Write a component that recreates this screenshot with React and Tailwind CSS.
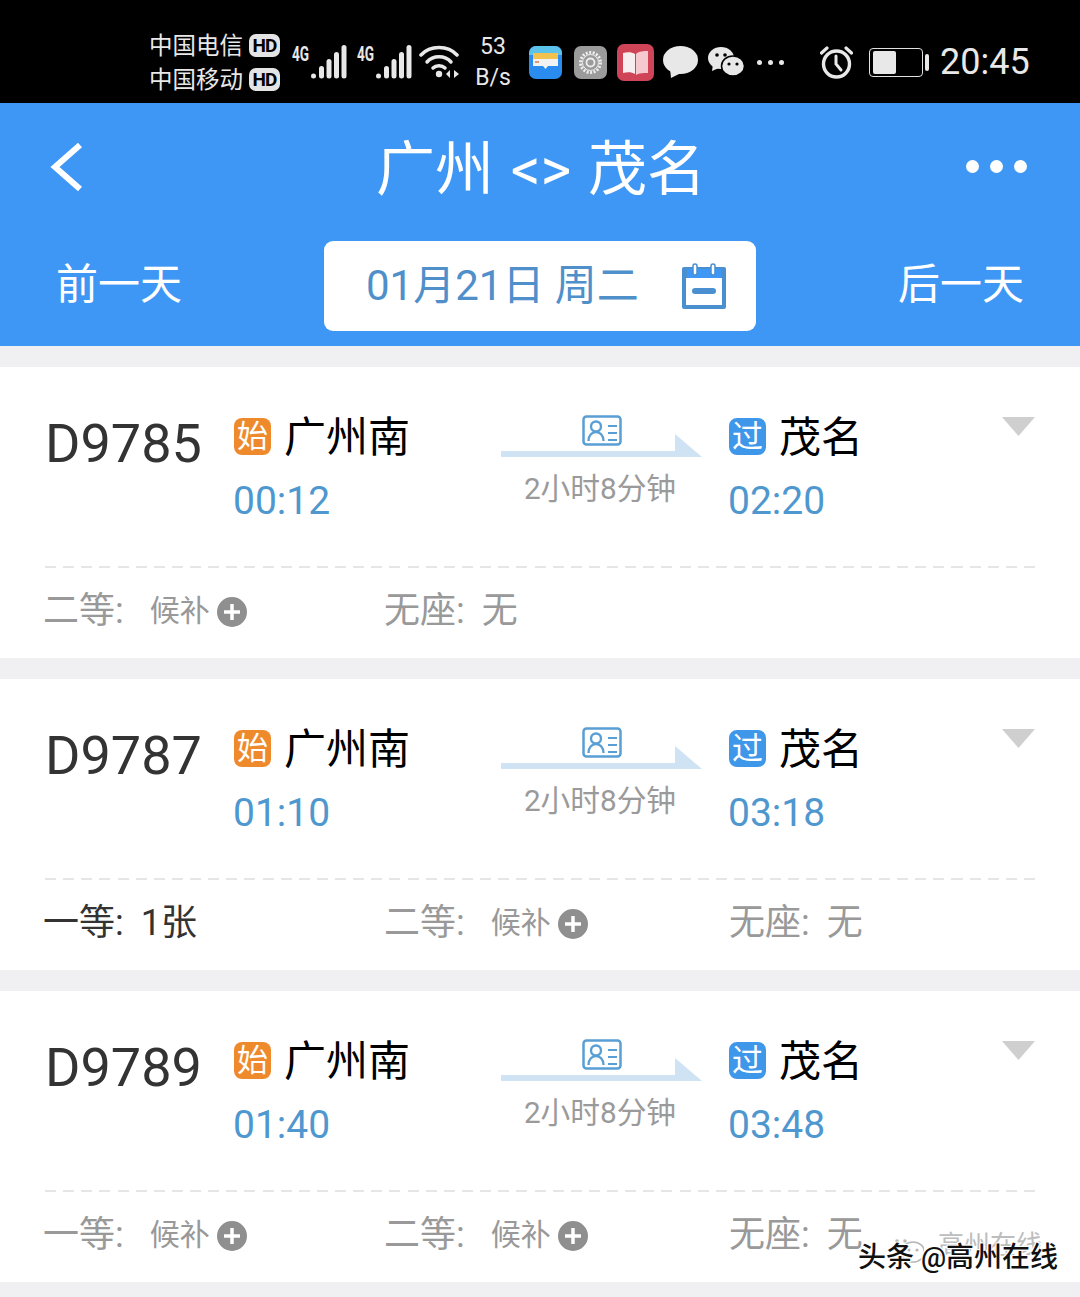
const FONT = 'font-["Roboto","Noto_Sans_CJK_SC",sans-serif]';

const trains = [
  {
    no: "D9785", dep: "00:12", arr: "02:20",
    seats: [
      { label: "二等:", wait: true },
      { label: "无座:", value: "无" },
    ],
  },
  {
    no: "D9787", dep: "01:10", arr: "03:18",
    seats: [
      { label: "一等:", value: "1张", dark: true },
      { label: "二等:", wait: true },
      { label: "无座:", value: "无" },
    ],
  },
  {
    no: "D9789", dep: "01:40", arr: "03:48",
    seats: [
      { label: "一等:", wait: true },
      { label: "二等:", wait: true },
      { label: "无座:", value: "无" },
    ],
  },
];

function HdBadge() {
  return (
    <span className="ml-[6px] flex h-[23px] w-[31px] items-center justify-center rounded-[7px] bg-[#e4e4e4] text-[19px] font-bold leading-none tracking-[-1px] text-black">
      HD
    </span>
  );
}

function Signal() {
  return (
    <div className="flex items-start">
      <span className="w-[19px] origin-left text-[20px] font-bold leading-[18px] text-[#e8e8e8] [transform:scaleX(0.68)]">4G</span>
      <svg width="36" height="34" viewBox="0 0 36 34">
        <circle cx="2.500" cy="31" r="2.500" fill="#e8e8e8" />
        <rect x="8" y="21" width="5" height="12.500" rx="2.500" fill="#e8e8e8" />
        <rect x="15.500" y="14" width="5" height="19.500" rx="2.500" fill="#e8e8e8" />
        <rect x="23" y="7" width="5" height="26.500" rx="2.500" fill="#e8e8e8" />
        <rect x="30.500" y="0" width="5" height="33.500" rx="2.500" fill="#e8e8e8" />
      </svg>
    </div>
  );
}

function Wifi() {
  return (
    <svg width="42" height="36" viewBox="0 0 42 36" fill="none" stroke="#e8e8e8" strokeWidth="3.500" strokeLinecap="round">
      <path d="M2 11C11 1 29 1 38 11" />
      <path d="M8 18C14 11 26 11 32 18" />
      <path d="M14 24C17 21 23 21 26 24" />
      <circle cx="20" cy="30" r="3.200" fill="#e8e8e8" stroke="none" />
      <path d="M31 26l-4 4 4 4z" fill="#e8e8e8" stroke="none" />
      <path d="M35 26l5 4-5 4z" fill="#e8e8e8" stroke="none" />
    </svg>
  );
}

function WalletApp() {
  return (
    <svg width="33" height="33" viewBox="0 0 33 33">
      <rect width="33" height="33" rx="7" fill="#2a8cee" />
      <path d="M0 7a7 7 0 0 1 7-7h19a7 7 0 0 1 7 7v2H0z" fill="#5cc3ec" />
      <rect x="4" y="7" width="25" height="6" fill="#f3c24e" />
      <rect x="4" y="13" width="25" height="7" fill="#f2f2f2" />
      <path d="M14 20h5l-2.500 3z" fill="#f2f2f2" />
      <rect x="6" y="15" width="4" height="2" fill="#e09a7a" />
    </svg>
  );
}

function SettingsApp() {
  return (
    <svg width="33" height="33" viewBox="0 0 33 33" fill="none">
      <rect width="33" height="33" rx="7" fill="#9b9b9b" />
      <circle cx="16.500" cy="16.500" r="10" stroke="#eeeeee" strokeWidth="3" strokeDasharray="2 1.500" />
      <circle cx="16.500" cy="16.500" r="8" stroke="#eeeeee" strokeWidth="1" />
      <circle cx="16.500" cy="16.500" r="4" stroke="#eeeeee" strokeWidth="1.800" />
    </svg>
  );
}

function BookApp() {
  return (
    <svg width="37" height="37" viewBox="0 0 37 37">
      <rect width="37" height="37" rx="7" fill="#cf4456" />
      <path d="M6 9c4-1 9-1 12 1v20c-3-2-8-2-12-1z" fill="#f7eef0" />
      <path d="M19 10c3-3 8-3 12-3v22c-4 0-9 0-12 2z" fill="#f6c9d0" />
    </svg>
  );
}

function Bubble() {
  return (
    <svg width="35" height="32" viewBox="0 0 35 32">
      <ellipse cx="17.500" cy="14" rx="17.500" ry="14" fill="#e8e8e8" />
      <path d="M7 22l1 10 10-5z" fill="#e8e8e8" />
    </svg>
  );
}

function WeChat({ color = "#e8e8e8", ring = "#000" }) {
  return (
    <svg width="36" height="30" viewBox="0 0 36 30">
      <ellipse cx="13" cy="11" rx="13" ry="11" fill={color} />
      <path d="M5 17l-1 7 7-3z" fill={color} />
      <ellipse cx="25" cy="19" rx="11.500" ry="10" fill={color} stroke={ring} strokeWidth="1.500" />
      <circle cx="9" cy="8" r="1.800" fill={ring} />
      <circle cx="17" cy="8" r="1.800" fill={ring} />
      <circle cx="21" cy="17" r="1.600" fill={ring} />
      <circle cx="29" cy="17" r="1.600" fill={ring} />
    </svg>
  );
}

function Alarm() {
  return (
    <svg width="33" height="33" viewBox="0 0 33 33" fill="none" stroke="#e8e8e8" strokeLinecap="round">
      <circle cx="16.500" cy="18" r="13" strokeWidth="3.400" />
      <path d="M16 10v8l5 6" strokeWidth="3" />
      <path d="M1.500 7L7 2" strokeWidth="3.200" />
      <path d="M31.500 7L26 2" strokeWidth="3.200" />
    </svg>
  );
}

function Battery() {
  return (
    <div className="flex items-center">
      <div className="flex h-[29px] w-[54px] items-center rounded-[4px] border border-[#e0e0e0] pl-[3px]">
        <div className="h-[23px] w-[23px] rounded-[2px] bg-[#e8e8e8]" />
      </div>
      <div className="ml-[2px] h-[17px] w-[4px] rounded-[2px] bg-[#e8e8e8]" />
    </div>
  );
}

function StatusBar() {
  return (
    <div className="flex h-[103px] items-center bg-black pl-[149px] pt-[21px] text-[#e8e8e8]">
      <div className="flex w-[132px] flex-col gap-[10px] pt-[1px]">
        <div className="flex h-[24px] items-center text-[23.500px] leading-[24px]">中国电信<HdBadge /></div>
        <div className="flex h-[24px] items-center text-[23.500px] leading-[24px]">中国移动<HdBadge /></div>
      </div>
      <div className="ml-[11px]"><Signal /></div>
      <div className="ml-[10px]"><Signal /></div>
      <div className="ml-[7px]"><Wifi /></div>
      <div className="ml-[12px] flex w-[40px] flex-col items-center text-[23px] leading-[31px]">
        <span>53</span>
        <span>B/s</span>
      </div>
      <div className="ml-[16px]"><WalletApp /></div>
      <div className="ml-[12px]"><SettingsApp /></div>
      <div className="ml-[10px]"><BookApp /></div>
      <div className="ml-[9px]"><Bubble /></div>
      <div className="ml-[10px]"><WeChat /></div>
      <div className="ml-[13px] flex gap-[6px]">
        <span className="h-[5px] w-[5px] rounded-full bg-[#e8e8e8]" />
        <span className="h-[5px] w-[5px] rounded-full bg-[#e8e8e8]" />
        <span className="h-[5px] w-[5px] rounded-full bg-[#e8e8e8]" />
      </div>
      <div className="ml-[36px]"><Alarm /></div>
      <div className="ml-[16px]"><Battery /></div>
      <span className="ml-[11px] text-[36px] leading-none">20:45</span>
    </div>
  );
}

function CalendarIcon() {
  return (
    <svg width="46" height="46" viewBox="0 0 46 46" fill="none">
      <path d="M3 4h40a2 2 0 0 1 2 2v38a2 2 0 0 1-2 2H3a2 2 0 0 1-2-2V6a2 2 0 0 1 2-2z" fill="#4a90d0" />
      <rect x="5" y="15" width="36" height="27" fill="#fff" />
      <rect x="6" y="6" width="34" height="9" fill="#3e97f5" />
      <rect x="12" y="1" width="4" height="11" rx="2" fill="#fff" stroke="#4a90d0" strokeWidth="1.500" />
      <rect x="30" y="1" width="4" height="11" rx="2" fill="#fff" stroke="#4a90d0" strokeWidth="1.500" />
      <rect x="11" y="25" width="24" height="6" rx="3" fill="#4a90d0" />
    </svg>
  );
}

function Header() {
  return (
    <div className="h-[243px] bg-[#3e97f5] text-white">
      <div className="flex h-[138px] items-start">
        <div className="ml-[50px] mt-[40px] w-[32px]">
          <svg width="33" height="48" viewBox="0 0 33 48" fill="none" stroke="#fff" strokeWidth="6">
            <path d="M30 2L5 24L30 46" />
          </svg>
        </div>
        <h1 className="ml-[294px] mt-[30px] text-[59px] font-normal leading-[74px] whitespace-nowrap [word-spacing:2px]">广州 &lt;&gt; 茂名</h1>
        <div className="ml-auto mr-[53px] mt-[57px] flex gap-[11px]">
          <span className="h-[13px] w-[13px] rounded-full bg-white" />
          <span className="h-[13px] w-[13px] rounded-full bg-white" />
          <span className="h-[13px] w-[13px] rounded-full bg-white" />
        </div>
      </div>
      <div className="flex items-center">
        <span className="ml-[56px] w-[268px] pb-[3px] text-[42px] leading-[87px]">前一天</span>
        <div className="flex h-[90px] w-[432px] items-center rounded-[9px] bg-white pl-[42px] text-[42px] text-[#4f8fca]">
          <span className="w-[315px] pb-[2px] whitespace-nowrap">01月21日 周二</span>
          <CalendarIcon />
        </div>
        <span className="ml-[142px] pb-[3px] text-[42px] leading-[87px]">后一天</span>
      </div>
    </div>
  );
}

function RouteArrow() {
  return (
    <div className="flex w-[201px] flex-col items-center">
      <svg width="201" height="44" viewBox="0 0 201 44" fill="none">
        <rect x="82.500" y="1.500" width="37" height="28" rx="3" stroke="#5a9fd4" strokeWidth="2.500" />
        <circle cx="95" cy="11.500" r="5" stroke="#5a9fd4" strokeWidth="2.400" />
        <path d="M87.500 26c0-12 15-12 15 0" stroke="#5a9fd4" strokeWidth="2.400" />
        <path d="M107 11h9M107 18h9M107 25h9" stroke="#5a9fd4" strokeWidth="2" />
        <path d="M0 36h174V19l27 23H0z" fill="#cfe3f5" />
      </svg>
      <span className="mt-[10px] pr-[3px] text-[29.700px] leading-[40px] whitespace-nowrap text-[#9a9a9a]">2小时8分钟</span>
    </div>
  );
}

function StationBlock({ badge, badgeClass, name, time, width }) {
  return (
    <div className={width}>
      <div className="flex h-[37px] items-center">
        <span className={`flex h-[37px] w-[37px] items-center justify-center rounded-[8px] text-[31px] leading-none text-white ${badgeClass}`}>
          {badge}
        </span>
        <span className="ml-[13px] pt-[2px] text-[42px] leading-[37px] text-black">{name}</span>
      </div>
      <div className="-ml-[1px] mt-[24px] text-[39px] leading-[45px] text-[#4f97cf]">{time}</div>
    </div>
  );
}

function PlusDot() {
  return (
    <svg width="30" height="30" viewBox="0 0 30 30" className="ml-[7px] mt-[1px]">
      <circle cx="15" cy="15" r="15" fill="#8f8f8f" />
      <path d="M15 7v16M7 15h16" stroke="#fff" strokeWidth="3.500" />
    </svg>
  );
}

function Seat({ seat, width }) {
  const tone = seat.dark ? "text-[#333333]" : "text-[#999999]";
  return (
    <div className={`flex items-center ${width} ${tone}`}>
      <span className="text-[36px] leading-[44px] whitespace-nowrap">{seat.label}</span>
      {seat.wait ? (
        <div className="ml-[26px] flex items-center">
          <span className="text-[30px] leading-[44px]">候补</span>
          <PlusDot />
        </div>
      ) : (
        <span className="ml-[17px] text-[36px] leading-[44px] whitespace-nowrap">{seat.value}</span>
      )}
    </div>
  );
}

function TrainCard({ train }) {
  const widths = train.seats.length === 2
    ? ["w-[341px]", "w-[345px]"]
    : ["w-[341px]", "w-[345px]", "w-[300px]"];
  return (
    <section className="h-[291px] bg-white">
      <div className="flex h-[199px] items-start pt-[51px]">
        <div className="ml-[45px] w-[189px] text-[54px] leading-[52px] text-[#333333]">{train.no}</div>
        <StationBlock badge="始" badgeClass="bg-[#ee8a2c]" name="广州南" time={train.dep} width="w-[267px]" />
        <div className="-mt-[3px]"><RouteArrow /></div>
        <div className="ml-[27px]">
          <StationBlock badge="过" badgeClass="bg-[#3f97ea]" name="茂名" time={train.arr} width="w-[273px]" />
        </div>
        <svg width="33" height="19" viewBox="0 0 33 19" className="-mt-[1px]">
          <path d="M0 0h33L16.500 19z" fill="#cfcfcf" />
        </svg>
      </div>
      <div className="ml-[45px] mr-[44px] h-[2px] bg-[repeating-linear-gradient(90deg,#e6e6e6_0_11px,transparent_11px_18.130px)]" />
      <div className="flex h-[90px] items-start pl-[43px] pt-[21px]">
        {train.seats.map((seat, i) => (
          <Seat key={i} seat={seat} width={widths[i]} />
        ))}
      </div>
    </section>
  );
}

export default function App() {
  return (
    <div className={`relative h-[1297px] w-[1080px] overflow-hidden bg-[#f0f0f2] ${FONT}`}>
      <StatusBar />
      <Header />
      <div className="flex flex-col gap-[21px] pt-[21px]">
        {trains.map((train) => (
          <TrainCard key={train.no} train={train} />
        ))}
      </div>
      {/* Reposted-from credit stamped over the bottom corner */}
      <div className="absolute left-[888px] top-[1233px] opacity-70"><WeChat color="#ffffff" ring="#999999" /></div>
      <div className="absolute left-[938px] top-[1232px] text-[26px] leading-none text-[#bdbdbd]">高州在线</div>
      <div className="absolute left-[858px] top-[1243px] whitespace-nowrap text-[28px] font-medium leading-[30px] text-[#111111] [text-shadow:1px_1px_0_#fff,-1px_-1px_0_#fff,1px_-1px_0_#fff,-1px_1px_0_#fff]">
        头条 @高州在线
      </div>
    </div>
  );
}
